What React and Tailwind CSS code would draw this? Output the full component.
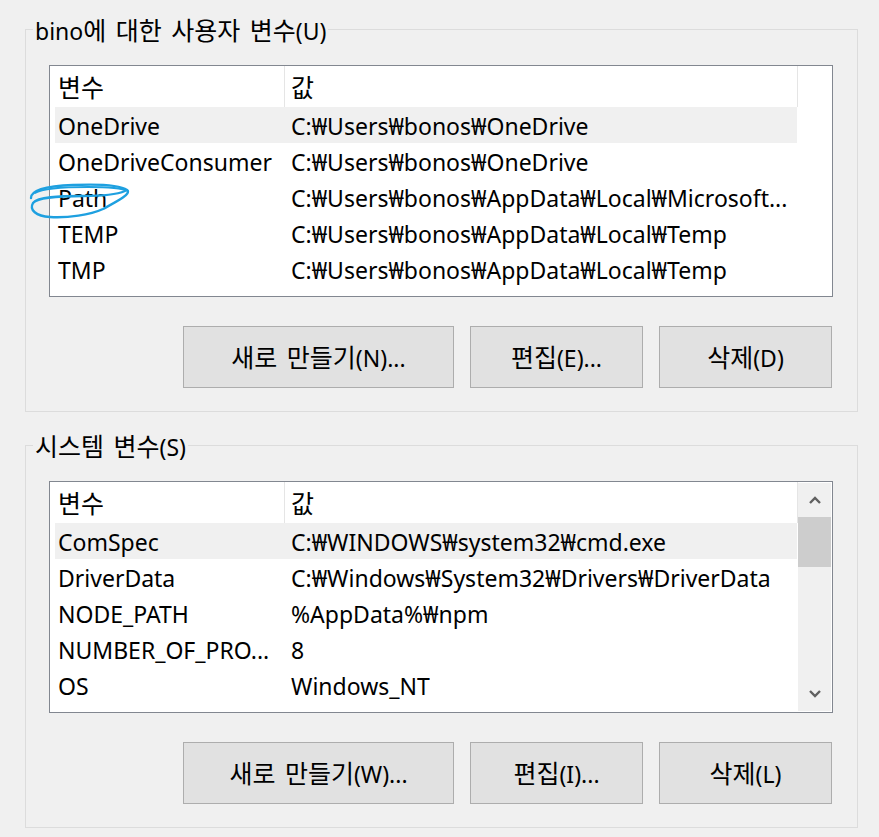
import React from "react";

const userVars = [
  ["OneDrive", "C:₩Users₩bonos₩OneDrive", true],
  ["OneDriveConsumer", "C:₩Users₩bonos₩OneDrive", false],
  ["Path", "C:₩Users₩bonos₩AppData₩Local₩Microsoft...", false],
  ["TEMP", "C:₩Users₩bonos₩AppData₩Local₩Temp", false],
  ["TMP", "C:₩Users₩bonos₩AppData₩Local₩Temp", false],
];

const sysVars = [
  ["ComSpec", "C:₩WINDOWS₩system32₩cmd.exe", true],
  ["DriverData", "C:₩Windows₩System32₩Drivers₩DriverData", false],
  ["NODE_PATH", "%AppData%₩npm", false],
  ["NUMBER_OF_PRO...", "8", false],
  ["OS", "Windows_NT", false],
];

// Renders Korean runs a little larger so they match the reference font's proportions.
function T({ children }) {
  const parts = String(children).split(/([\uAC00-\uD7A3]+(?: [\uAC00-\uD7A3]+)*)/);
  return (
    <>
      {parts.map((p, i) =>
        /[\uAC00-\uD7A3]/.test(p) ? (
          <span key={i} className="text-[25px]">
            {p}
          </span>
        ) : (
          <React.Fragment key={i}>{p}</React.Fragment>
        )
      )}
    </>
  );
}

function Chevron({ up }) {
  return (
    <svg width="12" height="8" viewBox="0 0 12 8" className="block">
      <polyline
        points={up ? "1,7 6,2 11,7" : "1,1 6,6 11,1"}
        fill="none"
        stroke="#606060"
        strokeWidth="2.4"
      />
    </svg>
  );
}

function ListView({ rows, scroll, children }) {
  return (
    <div className="relative flex w-[784px] h-[232px] border border-[#828790] bg-white">
      <div className="w-[748px] flex flex-col overflow-hidden">
        <div className="flex h-[41px] shrink-0 items-center">
          <div className="w-[235px] h-full flex items-center pl-[8px] pt-[1px] border-r border-[#e5e5e5]">
            <T>변수</T>
          </div>
          <div className="w-[513px] h-full flex items-center pl-[6px] pt-[1px] border-r border-[#e5e5e5]">
            <T>값</T>
          </div>
        </div>
        {rows.map(([name, value, sel]) => (
          <div
            key={name}
            className={
              "ml-[5px] w-[742px] h-[36px] shrink-0 flex items-center pt-[2px] " +
              (sel ? "bg-[#f0f0f0]" : "")
            }
          >
            <div className="w-[229px] pl-[3px] whitespace-nowrap overflow-hidden">{name}</div>
            <div className="pl-[7px] whitespace-nowrap overflow-hidden">{value}</div>
          </div>
        ))}
      </div>
      {scroll ? (
        <div className="w-[33px] my-[1px] flex flex-col bg-[#f0f0f0]">
          <div className="h-[34px] flex items-center justify-center">
            <Chevron up />
          </div>
          <div className="h-[50px] bg-[#cdcdcd]" />
          <div className="flex-1" />
          <div className="h-[34px] flex items-center justify-center">
            <Chevron />
          </div>
        </div>
      ) : null}
      {children}
    </div>
  );
}

function Button({ w, children }) {
  return (
    <div
      className={
        "h-[62px] flex items-center justify-center border border-[#adadad] bg-[#e1e1e1] whitespace-nowrap [word-spacing:3px] " +
        w
      }
    >
      <span>
        <T>{children}</T>
      </span>
    </div>
  );
}

function GroupBox({ title, className, children }) {
  return (
    <div className={"relative w-[833px] border border-[#dcdcdc] pt-[35px] pl-[23px] pb-[23px] " + className}>
      <div className="absolute left-[7px] top-0 -translate-y-1/2 px-[2px] bg-[#f0f0f0] leading-[30px] whitespace-nowrap [word-spacing:3px]">
        <T>{title}</T>
      </div>
      {children}
    </div>
  );
}

export default function App() {
  return (
    <div className="w-[879px] h-[837px] bg-[#f0f0f0] pt-[29px] pl-[25px] overflow-hidden font-['Noto_Sans','Noto_Sans_CJK_KR',sans-serif] text-[23px] text-black leading-[30px]">
      <GroupBox title="bino에 대한 사용자 변수(U)" className="">
        <ListView rows={userVars} scroll={false}>
          <svg
            className="absolute left-[-22px] top-[116px] pointer-events-none"
            width="106"
            height="40"
            viewBox="0 0 106 40"
          >
            <path
              d="M 3 16 C 3 8, 18 4, 45 3 C 70 2, 92 3, 99 8 C 104 12, 88 20, 75 27 C 62 33, 40 36, 22 35 C 8 34, 1 28, 5 21 C 10 15, 30 14, 55 14 C 75 14, 90 12, 97 9"
              fill="none"
              stroke="#1ea0e0"
              strokeWidth="2.4"
              strokeLinecap="round"
              strokeLinejoin="round"
            />
            <path
              d="M 7 11 C 15 6, 35 5, 60 5 C 80 5, 94 6, 100 9"
              fill="none"
              stroke="#1ea0e0"
              strokeWidth="1.8"
              strokeLinecap="round"
            />
          </svg>
        </ListView>
        <div className="flex ml-[134px] mt-[29px] gap-[16px]">
          <Button w="w-[271px]">새로 만들기(N)...</Button>
          <Button w="w-[173px]">편집(E)...</Button>
          <Button w="w-[173px]">삭제(D)</Button>
        </div>
      </GroupBox>
      <GroupBox title="시스템 변수(S)" className="mt-[33px]">
        <ListView rows={sysVars} scroll />
        <div className="flex ml-[134px] mt-[29px] gap-[16px]">
          <Button w="w-[271px]">새로 만들기(W)...</Button>
          <Button w="w-[173px]">편집(I)...</Button>
          <Button w="w-[173px]">삭제(L)</Button>
        </div>
      </GroupBox>
    </div>
  );
}
